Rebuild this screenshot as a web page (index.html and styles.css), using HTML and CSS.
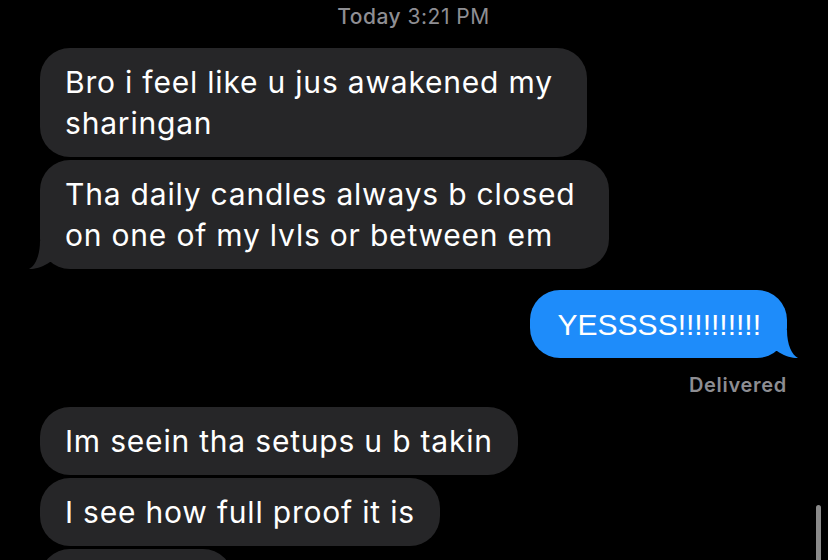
FILE: index.html
```html
<!DOCTYPE html>
<html>
<head>
<meta charset="utf-8">
<link rel="stylesheet" href="styles.css">
</head>
<body>
<div class="thread">
  <div class="stamp"><span class="day">Today</span> 3:21 PM</div>

  <div class="group in">
    <div class="bubble gray wide">Bro i feel like u jus awakened my<br>sharingan</div>
    <div class="bubble gray wide">Tha daily candles always b closed<br>on one of my lvls or between em
      <svg class="tail-svg left" width="30" height="30" viewBox="-12 -30 30 30"><path d="M0,-28 C0,-13 -5,-3 -11,0 C-6,0.5 3,-2 10,-7 L16,-7 L16,-28 Z"/></svg>
    </div>
  </div>

  <div class="group out">
    <div class="bubble blue">YESSSS!!!!!!!!!!
      <svg class="tail-svg right" width="30" height="30" viewBox="-18 -30 30 30"><path d="M0,-28 C0,-13 5,-3 11,0 C6,0.5 -3,-2 -10,-7 L-16,-7 L-16,-28 Z"/></svg>
    </div>
    <div class="status">Delivered</div>
  </div>

  <div class="group in">
    <div class="bubble gray">Im seein tha setups u b takin</div>
    <div class="bubble gray">I see how full proof it is</div>
    <div class="bubble gray partial">&nbsp;</div>
  </div>
</div>
<div class="scrollbar"></div>
</body>
</html>
```

FILE: styles.css
```css
html, body {
  margin: 0;
  padding: 0;
  background: #000;
  height: 560px;
  overflow: hidden;
}
body {
  position: relative;
  font-family: Inter, "Noto Sans", sans-serif;
}
.thread {
  display: flex;
  flex-direction: column;
  padding: 0 41px 0 40px;
}
.stamp {
  text-align: center;
  color: #8e8e93;
  font-size: 21px;
  line-height: 34px;
  margin-bottom: 14px;
  letter-spacing: 0.5px;
}
.stamp .day {
  font-weight: 500;
}
.group {
  display: flex;
  flex-direction: column;
  gap: 3px;
}
.group.in {
  align-items: flex-start;
}
.group.out {
  align-items: flex-end;
  margin-top: 21px;
}
.bubble {
  position: relative;
  border-radius: 30px;
  padding: 13.5px 25px;
  font-size: 30px;
  line-height: 41px;
  letter-spacing: 0.8px;
  color: #fff;
  white-space: nowrap;
  box-sizing: border-box;
}
.gray {
  background: #262628;
  fill: #262628;
}
.gray.wide {
  padding-right: 34px;
}
.partial {
  width: 193px;
}
.blue {
  background: #1e8cfa;
  fill: #1e8cfa;
  font-family: "Liberation Sans", Arial, sans-serif;
  letter-spacing: 0;
  padding: 13.5px 26px 13.5px 28px;
}
.tail-svg {
  position: absolute;
  bottom: 0;
}
.tail-svg.left {
  left: -12px;
}
.tail-svg.right {
  right: -12px;
}
.status {
  color: #8d8d92;
  font-size: 20px;
  font-weight: 600;
  letter-spacing: 0.7px;
  line-height: 24px;
  margin-top: 12px;
  margin-bottom: 10px;
}
.scrollbar {
  position: absolute;
  right: 7px;
  top: 505px;
  width: 5px;
  height: 70px;
  border-radius: 3px;
  background: #8a8a8a;
}
```
